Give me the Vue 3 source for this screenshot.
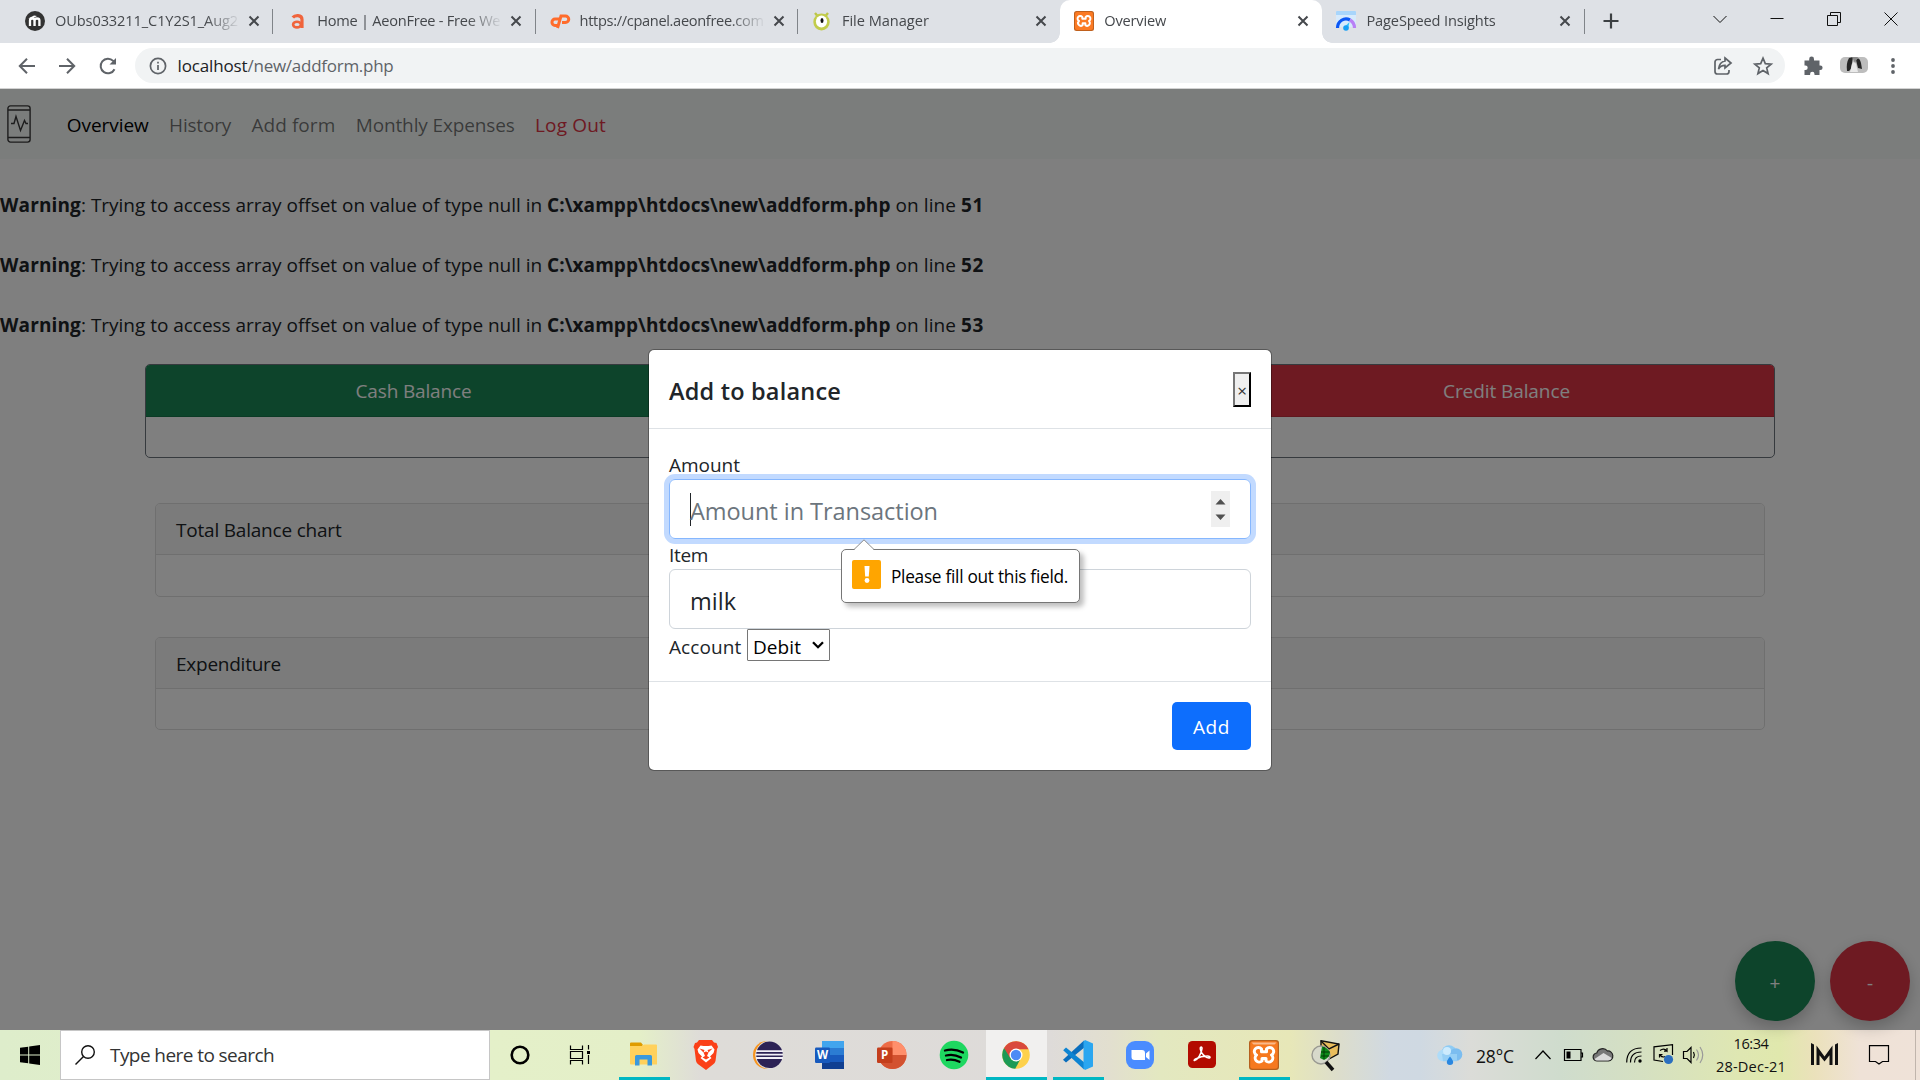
<script setup>
// v-fit="width" spreads or tightens the letters of a run of text to a set width
const vFit = {
  mounted(el, { value }) {
    const natural = el.getBoundingClientRect().width
    const count = [...el.textContent].length
    el.style.letterSpacing = `${(value - natural) / count}px`
  },
}

const tabs = [
  { icon: 'moodle', title: 'OUbs033211_C1Y2S1_Aug2', width: 183, sep: true },
  { icon: 'aeon', title: 'Home | AeonFree - Free We', width: 183, sep: true },
  { icon: 'cpanel', title: 'https://cpanel.aeonfree.com', width: 184, sep: true },
  { icon: 'monsta', title: 'File Manager', width: 87 },
  { icon: 'xampp', title: 'Overview', width: 62, active: true },
  { icon: 'speed', title: 'PageSpeed Insights', width: 129, sep: true },
]
const links = [
  { text: 'Overview', width: 82, kind: 'active' },
  { text: 'History', width: 62 },
  { text: 'Add form', width: 84 },
  { text: 'Monthly Expenses', width: 159 },
  { text: 'Log Out', width: 71, kind: 'danger' },
]
const warnings = ['51', '52', '53']
const apps = [
  { id: 'explorer', open: true },
  { id: 'brave' },
  { id: 'eclipse' },
  { id: 'word' },
  { id: 'ppt' },
  { id: 'spotify' },
  { id: 'chrome', current: true },
  { id: 'code', open: true },
  { id: 'zoom' },
  { id: 'acrobat' },
  { id: 'xampp', open: true },
  { id: 'mail' },
]
</script>

<template>
  <div class="screen">
    <header class="tabstrip">
      <div v-for="t in tabs" :key="t.title" class="tab" :class="{ active: t.active, sep: t.sep }">
        <svg class="favicon" viewBox="0 0 20 20">
          <template v-if="t.icon === 'moodle'">
            <circle cx="10" cy="10" r="10" fill="#333" />
            <path d="M5 15V9.500q0-2 2.200-2t2.300 2V15M9.600 15V9.500q0-2 2.400-2t2.400 2V15" fill="none" stroke="#fff" stroke-width="2.300" />
            <path d="M3.200 7.500 9 4.500l3 .6-4 2.200z" fill="#fff" />
          </template>
          <template v-else-if="t.icon === 'aeon'">
            <path d="M5.800 6.600Q7.500 4.400 11 4.600q4 .2 4 4V17" fill="none" stroke="#f0643c" stroke-width="3.200" />
            <ellipse cx="10" cy="13.600" rx="3.900" ry="2.800" fill="none" stroke="#f0643c" stroke-width="2.600" />
          </template>
          <template v-else-if="t.icon === 'cpanel'">
            <path d="M9 8H5a3 3.200 0 0 0 0 6.500h2" fill="none" stroke="#ff6c2c" stroke-width="3" />
            <path d="M7.500 17 11 5h4.500a3 3 0 0 1 0 6.500H12" fill="none" stroke="#ff6c2c" stroke-width="3" />
          </template>
          <template v-else-if="t.icon === 'monsta'">
            <path d="M3 2 5.500 5M16 2 13.500 5" stroke="#bcc648" stroke-width="2.400" />
            <ellipse cx="9.500" cy="11" rx="8.200" ry="8.500" fill="#c2cc4b" />
            <ellipse cx="9.500" cy="10.500" rx="5.600" ry="6" fill="#fff" />
            <ellipse cx="10" cy="9.500" rx="1.500" ry="2.500" fill="#111" />
          </template>
          <template v-else-if="t.icon === 'xampp'">
            <rect width="20" height="20" rx="2.500" fill="#c0601c" />
            <rect x="1" y="1" width="18" height="18" rx="2" fill="#fb7a24" />
            <path transform="scale(.6667)" d="M12.500 9a4 4 0 1 0-5 6 4 4 0 1 0 5.500 6v-2.500h4V21a4 4 0 1 0 5.500-6 4 4 0 1 0-5-6v2.800h-5z" fill="none" stroke="#fff" stroke-width="3" stroke-linejoin="round" />
          </template>
          <template v-else>
            <path d="M0 1a1 1 0 0 1 1-1h18a1 1 0 0 1 1 1v15H0z" fill="#d6eafc" />
            <path d="M0 1a1 1 0 0 1 1-1h18a1 1 0 0 1 1 1v3H0z" fill="#a8d5fb" />
            <path d="M1.500 17a8.500 9 0 0 1 12.500-8" fill="none" stroke="#0b57f5" stroke-width="3.200" />
            <path d="M14 9a8.500 9 0 0 1 4.500 8" fill="none" stroke="#b980f5" stroke-width="3.200" />
            <path d="M8.500 16 13.500 11l-1.500 7z" fill="#35c3f5" />
            <circle cx="10" cy="17" r="2.800" fill="#16a0f5" />
          </template>
        </svg>
        <span class="title"><span v-fit="t.width" class="fit">{{ t.title }}</span></span>
        <svg class="close" viewBox="0 0 12 12"><path d="m1.500 1.500 9 9m0-9-9 9" /></svg>
      </div>
      <svg class="newtab" viewBox="0 0 16 16"><path d="M8 .5v15M.5 8h15" /></svg>
      <div class="winctl">
        <svg viewBox="0 0 14 14"><path d="m.5 4 6.500 6.500L13.500 4" /></svg>
        <svg viewBox="0 0 14 14"><path d="M.5 6.500h13" /></svg>
        <svg viewBox="0 0 14 14"><path d="M.5 3.500h10v10H.5zM3.500 3.500v-3h10v10h-3" /></svg>
        <svg viewBox="0 0 14 14"><path d="m.5.5 13 13m0-13-13 13" /></svg>
      </div>
    </header>

    <div class="toolbar">
      <svg class="tb back" viewBox="0 0 20 20"><path d="M18 10H3m7-7.200L2.800 10 10 17.200" /></svg>
      <svg class="tb fwd" viewBox="0 0 20 20"><path d="M2 10h15m-7-7.200 7.200 7.200-7.200 7.200" /></svg>
      <svg class="tb reload" viewBox="0 0 20 20"><path d="M16.500 13.200a7.300 7.300 0 1 1-1.300-8.300L17 6.700" /><path d="M18 2v6.500h-6.500z" fill="#5f6368" stroke="none" /></svg>
      <div class="omnibox">
        <svg class="info" viewBox="0 0 18 18"><circle cx="9" cy="9" r="7.600" /><path d="M9 8v5M9 4.800v1.800" /></svg>
        <span v-fit="70" class="fit host">localhost</span><span v-fit="146" class="fit path">/new/addform.php</span>
        <svg class="share" viewBox="0 0 20 20"><path d="M8 3.500H4.500a2.500 2.500 0 0 0-2.500 2.500v9.500A2.500 2.500 0 0 0 4.500 18h9a2.500 2.500 0 0 0 2.500-2.500V14" /><path d="M12 2l6 5-6 5V9.300c-3 0-5 1-6.500 3.700C6 9 8.500 5.500 12 5z" /></svg>
        <svg class="star" viewBox="0 0 20 20"><path d="m10 2.200 2.300 5.400 5.900.5-4.500 3.800 1.400 5.700-5.100-3.100-5.100 3.100 1.400-5.700-4.500-3.800 5.900-.5z" /></svg>
      </div>
      <svg class="puzzle" viewBox="0 0 20 20"><path d="M1.500 4.500h4.700V3a2.400 2.400 0 0 1 4.800 0v1.500h5.500v5h.8a2.300 2.300 0 0 1 0 4.600h-.8V19h-5v-1a2.200 2.200 0 0 0-4.400 0v1H1.500v-5h1a2.200 2.200 0 0 0 0-4.400h-1z" /></svg>
      <svg class="avatar" viewBox="0 0 28 16">
        <rect width="28" height="16" rx="5" fill="#bdbdbd" />
        <path d="M7 14Q6 6 9 1l4-1-2 12-2 2zM16 3q3-4 5 3l1 6-4-1z" fill="#262626" />
        <path d="M12 7q2-4 4 0l2 8H10z" fill="#e9e9e9" />
        <path d="M12 0h6l-3 6z" fill="#8a8a8a" />
      </svg>
      <svg class="dots" viewBox="0 0 4 16"><circle cx="2" cy="2" r="1.900" /><circle cx="2" cy="8" r="1.900" /><circle cx="2" cy="14" r="1.900" /></svg>
    </div>

    <main class="page">
      <nav class="nav">
        <svg class="brand" viewBox="0 0 24 38"><rect x=".9" y=".9" width="22.200" height="36.200" rx="2.500" /><path d="M1 5h22M1 32.500h22M4 18.500h3l2-7 4.500 14 4-10 1.500 3H21" /></svg>
        <a v-for="l in links" :key="l.text" :class="l.kind"><span v-fit="l.width" class="fit">{{ l.text }}</span></a>
      </nav>
      <p v-for="n in warnings" :key="n" class="warning">
        <b v-fit="81" class="fit">Warning</b><span v-fit="466" class="fit">: Trying to access array offset on value of type null in </span><b v-fit="343.500" class="fit">C:\xampp\htdocs\new\addform.php</b><span v-fit="70.500" class="fit"> on line </span><b v-fit="23" class="fit">{{ n }}</b>
      </p>
      <section class="balances">
        <div class="card dark"><h6 class="green"><span v-fit="116" class="fit">Cash Balance</span></h6></div>
        <div class="card dark"><h6 class="red"><span v-fit="127" class="fit">Credit Balance</span></h6></div>
      </section>
      <section class="charts">
        <div class="card"><h6><span v-fit="165.500" class="fit">Total Balance chart</span></h6></div>
        <div class="card short"><h6><span v-fit="105" class="fit">Expenditure</span></h6></div>
      </section>
      <div class="fabs">
        <button class="green">+</button>
        <button class="red">-</button>
      </div>

      <div class="backdrop"></div>

      <div class="modal">
        <div class="modal-head">
          <h5><span v-fit="172" class="fit">Add to balance</span></h5>
          <button class="x">×</button>
        </div>
        <div class="modal-body">
          <label><span v-fit="71" class="fit">Amount</span></label>
          <div class="field focus">
            <i class="caret"></i>
            <span v-fit="248" class="fit placeholder">Amount in Transaction</span>
            <svg class="spin" viewBox="0 0 19 36"><path d="M4.500 13.500 9.500 8l5 5.500zM4.500 23.500l5 5.500 5-5.500z" /></svg>
          </div>
          <label><span v-fit="39" class="fit">Item</span></label>
          <div class="field"><span v-fit="46" class="fit">milk</span></div>
          <div class="account">
            <span v-fit="72.500" class="fit">Account</span>
            <div class="select"><span v-fit="48" class="fit">Debit</span><svg viewBox="0 0 12 8"><path d="m1 1.200 5 5 5-5" /></svg></div>
          </div>
          <div class="bubble">
            <svg class="tip" viewBox="0 0 20 11"><path d="M0 11 10 .8 20 11z" fill="#fff" /><path d="M0 10.500 10 .8l10 9.700" fill="none" stroke="#8a8a8a" /></svg>
            <svg class="warn" viewBox="0 0 29 29"><rect width="29" height="29" rx="2" fill="#ffa500" /><path d="M12.500 6h5l-.7 10.500h-3.600z" fill="#fff" /><circle cx="15" cy="20.500" r="2.400" fill="#fff" /></svg>
            <span v-fit="177" class="fit">Please fill out this field.</span>
          </div>
        </div>
        <div class="modal-foot"><button><span v-fit="37" class="fit">Add</span></button></div>
      </div>
    </main>

    <footer class="taskbar">
      <div class="start"><svg viewBox="0 0 20 20"><path d="M0 2.800 8.200 1.700v7.800H0zM9.200 1.500 20 0v9.500H9.200zM0 10.500h8.200v7.800L0 17.200zM9.200 10.500H20V20L9.200 18.500z" /></svg></div>
      <div class="search">
        <svg viewBox="0 0 20 20"><circle cx="13" cy="7" r="6.300" /><path d="M8.500 11.500.5 19.500" /></svg>
        <span v-fit="164" class="fit">Type here to search</span>
      </div>
      <svg class="cortana" viewBox="0 0 20 20"><circle cx="10" cy="10" r="8.300" /></svg>
      <svg class="taskview" viewBox="0 0 20 20"><path d="M.5.500v4h12v-4M.5 19.500v-4h12v4M.5 6.500h12v7H.5zM18.500 0v4.500M18.500 10v9" /><path d="M17 6h3v3h-3z" fill="#000" stroke="none" /></svg>
      <div class="apps">
        <div v-for="a in apps" :key="a.id" class="app" :class="{ open: a.open, current: a.current }">
          <svg viewBox="0 0 30 30">
            <template v-if="a.id === 'explorer'">
              <path d="M1 3.500a1 1 0 0 1 1-1h10l2 2.500-2 2H1z" fill="#df9c00" />
              <path d="M1 6h12l2-1.500h12a1 1 0 0 1 1 1V24.500H2a1 1 0 0 1-1-1z" fill="#ffd15c" />
              <path d="M6 25.500v-9a1.500 1.500 0 0 1 1.500-1.500h14a1.500 1.500 0 0 1 1.500 1.500v9h-4.500v-6h-8v6z" fill="#3a99dc" />
            </template>
            <template v-else-if="a.id === 'brave'">
              <path d="M8 0h13l2 2.500 2.500.5 1.500 4-1 2-1.500 12q-.5 2-2.500 3.500L15 30l-7.500-5.500Q5.500 23 5 21L3.500 9l-1-2L4 3l2-.5z" fill="#fb4018" />
              <path d="m6.500 9.500 3-4 3 .5h5l3-.5 3 4-1 3.500-3.500 3.500 1.500 1.500-5.500 4.500L9.500 18l1.500-1.500L7.500 13z" fill="#fff" />
              <path d="m8.500 8.500 5 1.500-1 2.500zM21.500 8.500l-5 1.500 1 2.500zM12.500 12.500l1.500 3.500-2.500 1.500 3.500 2 3.500-2-2.500-1.500 1.500-3.500-2.500-1z" fill="#fb4018" />
            </template>
            <template v-else-if="a.id === 'eclipse'">
              <circle cx="14" cy="15" r="14" fill="#f7941e" />
              <circle cx="16.500" cy="15" r="14.200" fill="#dedcda" />
              <circle cx="16.500" cy="14.800" r="13.300" fill="#2c2255" />
              <path d="M3 11.200h27M2.500 14.600h27.500M3 18h27" stroke="#f2f0f8" stroke-width="1.800" />
            </template>
            <template v-else-if="a.id === 'word'">
              <path d="M7 1h22v7H7z" fill="#41a5ee" /><path d="M7 8h22v7H7z" fill="#2b7cd3" /><path d="M7 15h22v7H7z" fill="#185abd" /><path d="M7 22h22v7H7z" fill="#103f91" />
              <rect y="7.500" width="15" height="15.500" rx="1.200" fill="#185abd" />
              <text x="7.500" y="19" text-anchor="middle" class="glyph">W</text>
            </template>
            <template v-else-if="a.id === 'ppt'">
              <circle cx="15.500" cy="15" r="14" fill="#ed6c47" /><path d="M15.500 1a14 14 0 0 1 14 14h-14z" fill="#ff8f6b" /><path d="M1.500 15h28a14 14 0 0 1-28 0z" fill="#d35230" />
              <rect y="7.500" width="15.500" height="15.500" rx="1.200" fill="#c43e1c" />
              <text x="7.700" y="19" text-anchor="middle" class="glyph">P</text>
            </template>
            <template v-else-if="a.id === 'spotify'">
              <circle cx="15" cy="15" r="14.300" fill="#1ed760" />
              <path d="M6 10.500q9-2.500 18 2M7 15.500q7.500-2 15 2M8 20q6-1.500 12.500 1.800" fill="none" stroke="#000" stroke-width="2.300" stroke-linecap="round" />
            </template>
            <template v-else-if="a.id === 'chrome'">
              <circle cx="15" cy="15" r="13.800" fill="#fdd14c" />
              <path d="M15 15 3.050 8.100a13.800 13.800 0 0 0 11.200 20.700l5-9.500z" fill="#1c9a56" />
              <path d="M3.050 8.100A13.800 13.800 0 0 1 27.500 9.200H15l-6 8.500z" fill="#d9493c" />
              <circle cx="15" cy="15" r="6.500" fill="#fff" /><circle cx="15" cy="15" r="5.200" fill="#4c8bf5" />
            </template>
            <template v-else-if="a.id === 'code'">
              <path d="M22 7 3 22.500l-3-2.800L21 .500z" fill="#0a6ebd" />
              <path d="M22 23 3 7.500.200 10.300 21 29.500z" fill="#0d84d2" />
              <path d="m22 0 8 3.500v23L22 30l-1.500-1.500v-27z" fill="#2aa6f0" />
            </template>
            <template v-else-if="a.id === 'zoom'">
              <rect x="1" y="1" width="28" height="28" rx="9" fill="#4a8cff" />
              <path d="M6.500 10h10.500a3 3 0 0 1 3 3v7H9.500a3 3 0 0 1-3-3zM21 13.500l3.500-3v9.500l-3.500-3z" fill="#fff" />
            </template>
            <template v-else-if="a.id === 'acrobat'">
              <rect x="1" y="1" width="28" height="27" rx="4.500" fill="#b30b00" />
              <path d="M7.500 20.500c3-.5 7-6.500 7.500-12 .2-2-2-2-1.700.5.500 4 4.500 8.500 8.500 9 2 0 1.500-2-1-2-4 0-9.500 1.500-12.800 3.300-1 .8-1 1.300-.5 1.200z" fill="none" stroke="#fff" stroke-width="1.600" />
            </template>
            <template v-else-if="a.id === 'xampp'">
              <rect width="30" height="30" rx="3" fill="#b5601d" /><rect x="1.200" y="1.200" width="27.600" height="27.600" rx="2.500" fill="#f6791f" /><path d="M2.500 2.500h25l-2 2h-21z" fill="#f9b98a" />
              <path d="M12.500 9a4 4 0 1 0-5 6 4 4 0 1 0 5.500 6v-2.500h4V21a4 4 0 1 0 5.500-6 4 4 0 1 0-5-6v2.800h-5z" fill="none" stroke="#fff" stroke-width="3" stroke-linejoin="round" />
            </template>
            <template v-else>
              <path d="m10 .8 18 3.200-1 10-9 5-8-5z" fill="#e9bd5c" stroke="#111" stroke-width="1.400" /><path d="m10 1 8 8 10-5" fill="none" stroke="#111" stroke-width="1.400" />
              <circle cx="10" cy="15" r="9" fill="#d7d9cb" stroke="#9a9a92" stroke-width="1.400" />
              <path d="M11 6.500q6 1 8 6.500-1 5-6 7l-4-2z" fill="#0c8a18" /><path d="M10 12h9M10 16h8M13 7v12" stroke="#023d05" />
              <path d="m15 22 7 8" stroke="#111" stroke-width="3.500" />
            </template>
          </svg>
        </div>
      </div>
      <div class="tray">
        <svg class="weather" viewBox="0 0 26 20"><circle cx="12" cy="7.500" r="7.300" fill="#8ecbf4" /><circle cx="6" cy="10.500" r="5.800" fill="#aedcf9" /><circle cx="19" cy="9.500" r="6.300" fill="#7bbdf0" /><path d="M5 9h15v7.200H6z" fill="#96cff5" /><circle cx="10" cy="6" r="4" fill="#cdebfd" /><path d="M13 11.500q3.200 4 3.200 5.500a3.200 2.900 0 0 1-6.400 0q0-1.500 3.200-5.500z" fill="#2a87e0" /></svg>
        <span v-fit="38" class="fit temp">28°C</span>
        <svg class="up" viewBox="0 0 16 10"><path d="m.5 9 7.500-8 7.500 8" /></svg>
        <svg class="battery" viewBox="0 0 19 12"><path d="M.5.500h16.500v11H.5zM17.500 4h1v4h-1" /><path d="M2.500 2.500h4v7h-4z" fill="#000" stroke="none" /></svg>
        <svg class="cloud" viewBox="0 0 20 15"><path d="M4.500 14A4 4 0 0 1 3.800 6 6 5.500 0 0 1 14.500 4a4.800 5 0 0 1 1 10z" fill="#777" stroke="#222" /><path d="m1.500 12 9-6 8.300 5q-1 2.500-4 2.500H4q-1.500 0-2.500-1.500z" fill="#dadada" stroke="none" /></svg>
        <svg class="wifi" viewBox="0 0 16 16"><path d="M.7 15.500Q.7 1 15.500 1M4.500 15.500Q4.500 5 15.500 5M8.500 15.500q0-6.500 7-6.500" /><circle cx="14" cy="14" r="1.700" fill="#000" stroke="none" /></svg>
        <svg class="device" viewBox="0 0 21 20"><path d="M10 17.500 1 16V2.800L19.500.7V11M7 6.500q4-3 7 .5V4m0 3.200h-3M6.500 13.500v-3h3m-2.500.5q2.500 3 5 1.500" /><circle cx="15.500" cy="15.500" r="4.600" fill="#2b6fbf" stroke="none" /></svg>
        <svg class="speaker" viewBox="0 0 21 18"><path d="M.5 5.500H4L8 1.500v15L4 12.500H.5z" /><path d="M10.500 6q1.700 3 0 6" /><path d="M13.500 3.500q4 5.500 0 11M17 1q5.500 8 0 16" stroke="#999" /></svg>
        <div class="clock"><span v-fit="35" class="fit">16:34</span><span v-fit="70" class="fit">28-Dec-21</span></div>
        <svg class="im" viewBox="0 0 27 22"><path d="M0 0 3 1.500V22H0zM5.500 2.500 8.500 7v15h-3zM5.500 2.500l8 11 8-11v6l-8 10-8-10zM18.500 7l3-4.500V22h-3zM24 1.500 27 0v22h-3z" fill="#111" /></svg>
        <svg class="notif" viewBox="0 0 20 20"><path d="M.5.700h19v15.800h-6L10 19l-3.500-2.500h-6z" /></svg>
      </div>
    </footer>
  </div>
</template>

<style>
body {
  margin: 0;
  overflow: hidden;
}
</style>

<style scoped>
* {
  box-sizing: border-box;
}
.screen {
  width: 1920px;
  height: 1080px;
  display: flex;
  flex-direction: column;
  font-family: "Open Sans", "Noto Sans", sans-serif;
  font-size: 19px;
  color: #212529;
}
.fit {
  display: inline-block;
  white-space: pre;
}
svg {
  display: block;
  flex: none;
  fill: none;
  overflow: visible;
}
button {
  font-family: inherit;
  padding: 0;
}

/* browser tabs */
.tabstrip {
  height: 43px;
  background: #dee1e6;
  display: flex;
  padding-left: 11px;
}
.tab {
  width: 262.300px;
  height: 43px;
  display: flex;
  align-items: center;
  padding: 0 13px 1px 14px;
  position: relative;
  font-size: 14.600px;
  color: #45484c;
}
.tab.sep::after {
  content: "";
  position: absolute;
  right: 0;
  top: 9px;
  width: 1px;
  height: 25px;
  background: #808489;
}
.tab.active {
  background: #fff;
  border-radius: 10px 10px 0 0;
}
.tab.active::before,
.tab.active::after {
  content: "";
  position: absolute;
  bottom: 0;
  width: 10px;
  height: 10px;
}
.tab.active::before {
  left: -10px;
  background: radial-gradient(circle at 0 0, transparent 9.500px, #fff 10px);
}
.tab.active::after {
  right: -10px;
  background: radial-gradient(circle at 100% 0, transparent 9.500px, #fff 10px);
}
.favicon {
  width: 20px;
  height: 20px;
}
.title {
  width: 183px;
  margin: -2px 10px 0 10px;
  overflow: hidden;
  -webkit-mask-image: linear-gradient(90deg, #000 150px, transparent 186px);
  mask-image: linear-gradient(90deg, #000 150px, transparent 186px);
}
.close {
  width: 12px;
  height: 12px;
  stroke: #45484c;
  stroke-width: 2;
}
.newtab {
  width: 16px;
  height: 16px;
  margin: 13px 0 0 18px;
  stroke: #3c4043;
  stroke-width: 2.200;
}
.winctl {
  display: flex;
  gap: 43px;
  margin: 12px 0 0 94px;
}
.winctl svg {
  width: 14px;
  height: 14px;
  stroke: #111;
}

/* address row */
.toolbar {
  height: 46px;
  background: #fff;
  border-bottom: 1px solid #d2d2d2;
  display: flex;
  align-items: center;
}
.tb {
  width: 20px;
  height: 20px;
  stroke: #5f6368;
  stroke-width: 2;
}
.back {
  margin-left: 17px;
}
.fwd {
  margin-left: 20px;
}
.reload {
  margin-left: 21px;
}
.omnibox {
  width: 1650px;
  height: 35px;
  margin-left: 17px;
  border-radius: 18px;
  background: #f1f3f4;
  display: flex;
  align-items: center;
  font-size: 17px;
  color: #5f6368;
}
.info {
  width: 18px;
  height: 18px;
  margin: 0 11px 0 13.500px;
  stroke: #5f6368;
  stroke-width: 1.700;
}
.host {
  color: #202124;
}
.share {
  width: 20px;
  height: 20px;
  margin-left: auto;
  stroke: #5f6368;
  stroke-width: 1.700;
}
.star {
  width: 20px;
  height: 20px;
  margin: 0 12.500px 0 20px;
  stroke: #5f6368;
  stroke-width: 1.700;
}
.puzzle {
  width: 20px;
  height: 20px;
  margin-left: 17.500px;
  fill: #5f6368;
}
.avatar {
  width: 28px;
  height: 16px;
  margin: -1px 0 0 17px;
}
.dots {
  width: 4px;
  height: 16px;
  margin-left: 23px;
  fill: #5f6368;
}

/* page */
.page {
  height: 941px;
  position: relative;
  background: #fff;
}
.nav {
  height: 70px;
  background: #f7faf9;
  display: flex;
  align-items: center;
  padding: 0 0 0 7px;
  color: rgba(0, 0, 0, 0.55);
}
.brand {
  width: 24px;
  height: 38px;
  margin: 0 15.500px 0 0;
  stroke: #3a3a3a;
  stroke-width: 1.400;
}
.nav a {
  margin: 2px 0 0 20.300px;
  height: 28px;
  line-height: 28px;
}
.nav .active {
  color: #000;
}
.nav .danger {
  color: #dc3545;
}
.warning {
  margin: 30px 0 0;
  height: 30px;
  line-height: 30px;
  display: flex;
}
.warning:first-of-type {
  margin-top: 31px;
}
.warning b {
  font-weight: 700;
}
.balances {
  display: flex;
  justify-content: space-between;
  padding: 0 145px;
  margin-top: 24px;
}
.card {
  border: 1px solid #dfdfdf;
  border-radius: 5px;
  height: 94px;
  overflow: hidden;
}
.card.short {
  height: 93px;
}
.card h6 {
  margin: 0;
  height: 51px;
  line-height: 52px;
  font-size: 19px;
  font-weight: 400;
  background: #f7f7f7;
  border-bottom: 1px solid #dfdfdf;
  padding-left: 20px;
}
.card.dark {
  width: 537px;
  border-color: #6c757d;
}
.card.dark h6 {
  height: 52px;
  text-align: center;
  color: #fff;
  padding: 0;
  border-bottom-color: rgba(0, 0, 0, 0.125);
}
.green,
.card.dark .green {
  background-color: #1b8856;
}
.red,
.card.dark .red {
  background-color: #dc3545;
}
.charts {
  padding: 45px 155px 0;
  display: flex;
  flex-direction: column;
  gap: 40px;
}
.fabs {
  position: absolute;
  right: 10px;
  bottom: 9px;
  display: flex;
  gap: 15px;
}
.fabs button {
  width: 80px;
  height: 80px;
  border: 0;
  border-radius: 50%;
  color: #fff;
  font-size: 19px;
  padding-top: 4px;
  box-shadow: 0 6px 16px rgba(0, 0, 0, 0.22);
}
.backdrop {
  position: absolute;
  inset: 0;
  background: rgba(0, 0, 0, 0.5);
}

/* dialog */
.modal {
  position: absolute;
  left: 648px;
  top: 260px;
  width: 624px;
  height: 422px;
  background: #fff;
  background-clip: padding-box;
  border: 1px solid rgba(0, 0, 0, 0.3);
  border-radius: 6px;
}
.modal-head {
  height: 79px;
  border-bottom: 1px solid #dee2e6;
  padding: 0 20px;
  display: flex;
  align-items: center;
  justify-content: space-between;
}
.modal-head h5 {
  margin: 3px 0 0;
  font-size: 23.500px;
  font-weight: 600;
}
.x {
  width: 18px;
  height: 35px;
  border: 2px outset #555;
  border-color: #767676 #222 #222 #767676;
  background: #efefef;
  font-size: 17px;
  line-height: 30px;
  padding-top: 2px;
  color: #333;
}
.modal-body {
  position: relative;
  height: 253px;
  padding: 20px;
  border-bottom: 1px solid #dee2e6;
}
.modal-body label {
  display: block;
  height: 30px;
  line-height: 32px;
}
.field {
  height: 60px;
  border: 1px solid #ced4da;
  border-radius: 6px;
  display: flex;
  align-items: center;
  padding: 4px 20px 0;
  font-size: 23.500px;
}
.field.focus {
  border-color: #86b7fe;
  box-shadow: 0 0 0 5px #c2daff;
  padding-top: 0;
}
.caret {
  width: 1px;
  height: 33px;
  background: #212529;
  margin-right: -1px;
}
.placeholder {
  color: #6c757d;
  margin-top: 4px;
}
.spin {
  width: 19px;
  height: 36px;
  margin-left: auto;
  fill: #505050;
  background: #efefef;
}
.account {
  display: flex;
  align-items: center;
  height: 32px;
}
.account > span {
  padding-top: 4px;
}
.select {
  width: 83px;
  height: 32px;
  margin-left: 5.500px;
  border: 1px solid #767676;
  border-radius: 1px;
  display: flex;
  align-items: center;
  padding: 3px 5px 0;
  color: #000;
}
.select svg {
  width: 12px;
  height: 8px;
  margin: -4px 0 0 11px;
  stroke: #000;
  stroke-width: 2.300;
}
.bubble {
  position: absolute;
  left: 192px;
  top: 120px;
  width: 239px;
  height: 54px;
  border: 1px solid #767676;
  border-radius: 5px;
  background: #fff;
  box-shadow: 4px 4px 5px rgba(0, 0, 0, 0.25);
  display: flex;
  align-items: center;
  padding-left: 10px;
  font-size: 17.300px;
  color: #000;
}
.bubble .fit {
  margin: 0 0 0 10px;
}
.tip {
  position: absolute;
  left: 12px;
  top: -11px;
  width: 20px;
  height: 11px;
}
.warn {
  width: 29px;
  height: 29px;
  margin-top: -3px;
}
.modal-foot {
  height: 88px;
  padding: 20px;
  display: flex;
  justify-content: flex-end;
}
.modal-foot button {
  width: 79px;
  height: 48px;
  border: 0;
  border-radius: 5px;
  background: #0d6efd;
  color: #fff;
  font-size: 19px;
  padding-top: 2px;
}

/* taskbar */
.taskbar {
  height: 50px;
  display: flex;
  align-items: center;
  background: linear-gradient(90deg, #deedcb 0, #e4f0c9 490px, #e4efc8 640px, #dedcd8 700px, #dedbd9 1050px, #e2dfcf 1110px, #e3e8c0 1160px, #e7e7b8 1290px, #dcddcc 1340px, #d0d9e2 1390px, #cfd9e2 1420px, #dbdcd8 1470px, #cfdccd 1560px, #d5e0c2 1640px, #dfe7b2 1740px, #e0e8ad 1780px, #ebe1bb 1815px, #efe2d7 1860px, #efe2d8 1920px);
}
.start {
  width: 60px;
}
.start svg {
  width: 20px;
  height: 20px;
  margin-left: 20px;
  fill: #000;
}
.search {
  width: 430px;
  height: 50px;
  border: 1px solid #c6c6c6;
  background: #fff;
  display: flex;
  align-items: center;
  padding-left: 14px;
  color: #333;
}
.search svg {
  width: 20px;
  height: 20px;
  margin-right: 15px;
  stroke: #111;
  stroke-width: 1.400;
}
.cortana {
  width: 20px;
  height: 20px;
  margin-left: 20px;
  stroke: #000;
  stroke-width: 2.600;
}
.taskview {
  width: 20px;
  height: 20px;
  margin-left: 40px;
  stroke: #000;
  stroke-width: 1.200;
}
.apps {
  display: flex;
  margin-left: 23px;
}
.app {
  width: 62px;
  height: 50px;
  position: relative;
  display: flex;
  align-items: center;
  justify-content: center;
}
.app svg {
  width: 30px;
  height: 30px;
}
.app.current {
  background: linear-gradient(#f1f0ef, #f1f0ef) right / 61px 100% no-repeat;
}
.app.open::after,
.app.current::after {
  content: "";
  position: absolute;
  bottom: 0;
  left: 6px;
  width: 51px;
  height: 3px;
  background: #00b7c3;
}
.app.current::after {
  left: 1px;
  width: 61px;
}
.glyph {
  font: 700 11.500px "Open Sans", sans-serif;
  fill: #fff;
}
.tray {
  display: flex;
  align-items: center;
  flex: 1;
  height: 50px;
  margin-right: 4px;
  padding-left: 80px;
  border-right: 1px solid #c0b5ac;
  color: #111;
  font-size: 17.500px;
}
.tray svg {
  stroke: #000;
  stroke-width: 1.200;
}
.tray .weather {
  width: 26px;
  height: 20px;
  stroke: none;
}
.temp {
  margin: 2px 0 0 13px;
}
.up {
  width: 16px;
  height: 10px;
  margin-left: 21px;
}
.battery {
  width: 19px;
  height: 12px;
  margin-left: 13px;
}
.cloud {
  width: 20px;
  height: 15px;
  margin: -2px 0 0 10px;
}
.wifi {
  width: 16px;
  height: 16px;
  margin-left: 13px;
}
.device {
  width: 21px;
  height: 20px;
  margin: -2px 0 0 11px;
}
.speaker {
  width: 21px;
  height: 18px;
  margin-left: 9px;
}
.clock {
  width: 70px;
  margin-left: 12px;
  display: flex;
  flex-direction: column;
  align-items: center;
  font-size: 14.600px;
  line-height: 23px;
}
.tray .im {
  width: 27px;
  height: 22px;
  margin: -3px 0 0 25px;
  stroke: none;
}
.notif {
  width: 20px;
  height: 20px;
  margin-left: 31px;
}
</style>
